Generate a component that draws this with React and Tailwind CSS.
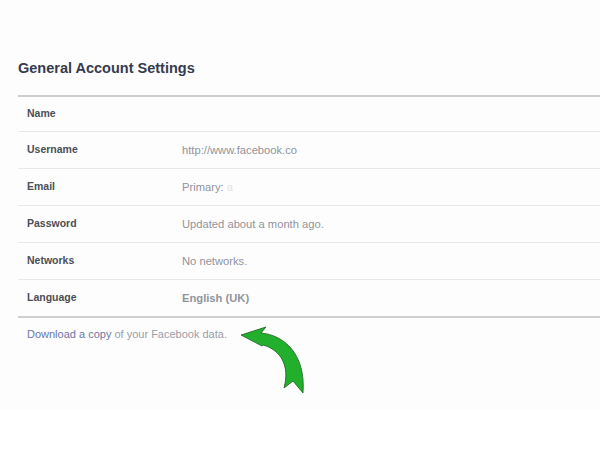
import React from 'react';

const rows = [
  { label: 'Name', value: '' },
  { label: 'Username', value: 'http://www.facebook.co' },
  { label: 'Email', value: 'Primary: ', extra: 'a' },
  { label: 'Password', value: 'Updated about a month ago.' },
  { label: 'Networks', value: 'No networks.' },
  { label: 'Language', value: 'English (UK)', strong: true },
];

function Arrow() {
  return (
    <svg width="80" height="80" viewBox="236 322 80 80" className="absolute left-[236px] top-[322px]">
      <path
        d="M241,335 L266,327 L261,333 C284,335 306,354 303,393 L293,381 L284,388 C290,366 281,350 263,345 L262,346 Z"
        fill="#22b02c"
        stroke="#1b5e1f"
        strokeWidth="0.8"
      />
    </svg>
  );
}

export default function App() {
  return (
    <div className="relative w-full h-[450px] bg-white" style={{ fontFamily: '"Liberation Sans", Arial, sans-serif' }}>
      <div className="h-[410px] bg-[#fdfdfd] pl-[18px] pt-[59px]">
        <h1 className="text-[14.5px] leading-[18px] font-bold text-[#353b4f]">General Account Settings</h1>
        <div className="mt-[18px] border-t-2 border-b-2 border-[#cfcfcf]">
          {rows.map((r, i) => (
            <div
              key={r.label}
              className={`flex items-center pl-[9px] ${i === 0 ? 'h-[35px]' : i === rows.length - 1 ? 'h-[36px]' : 'h-[37px]'} ${i < rows.length - 1 ? 'border-b border-[#e8e8e8]' : ''}`}
            >
              <div className="w-[155px] text-[10.5px] font-bold text-[#4b4f56]">{r.label}</div>
              <div className={`text-[11.2px] ${r.strong ? 'font-bold text-[#8f959f]' : 'text-[#90949c]'}`}>
                {r.value}
                {r.extra && <span className="text-[#e2e2e2]">{r.extra}</span>}
              </div>
            </div>
          ))}
        </div>
        <div className="pl-[9px] pt-[9px] text-[11px] leading-[14px]">
          <span className="text-[#6d77a3]">Download a copy</span>
          <span className="text-[#9a9ea8]"> of your Facebook data.</span>
        </div>
      </div>
      <Arrow />
    </div>
  );
}
